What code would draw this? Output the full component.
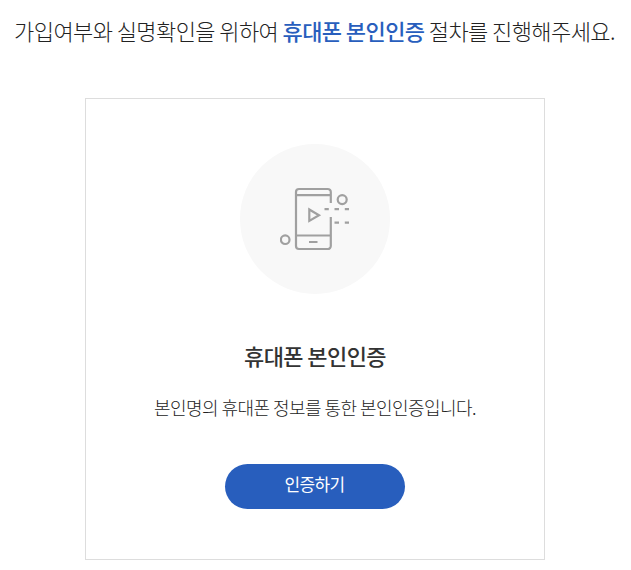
<main>
  <h1>가입여부와 실명확인을 위하여 <strong>휴대폰 본인인증</strong> 절차를 진행해주세요.</h1>
  <section class="card">
    <div class="circle">
      <svg width="70" height="64" viewBox="0 0 70 64" fill="none" stroke="#a0a0a0" stroke-width="2.2">
        <path d="M50.8 16V5a3 3 0 0 0-3-3H19a3 3 0 0 0-3 3v54a3 3 0 0 0 3 3h28.800a3 3 0 0 0 3-3V30M16 8.200h34.800M16 48.500h34.800M29 55h8.500M29.300 22.500v11.400l9.700-5.700z" />
        <path d="M44.500 22.200h4.300M54.500 22.200h4.500M64.800 22.200h4.200M54.500 35.700h4.500M64.800 35.700h4.200" />
        <circle cx="62.2" cy="12.600" r="4.500" /><circle cx="5.200" cy="52.700" r="4.300" />
      </svg>
    </div>
    <h2>휴대폰 본인인증</h2>
    <p>본인명의 휴대폰 정보를 통한 본인인증입니다.</p>
    <button type="button">인증하기</button>
  </section>
</main>

<style>
  :global(body) { background: #fff; }
  main { width: 631px; height: 570px; box-sizing: border-box; overflow: hidden; padding-top: 15px; color: #222; font-family: "Noto Sans CJK KR", sans-serif; }
  h1 { margin: 0 0 53px; padding-right: 2px; height: 30px; line-height: 30px; font-size: 22px; font-weight: 300; letter-spacing: -.58px; text-align: center; white-space: nowrap; }
  strong { font-weight: 500; color: #285ebd; }
  .card { width: 460px; height: 462px; box-sizing: border-box; margin-left: 85px; border: 1px solid #ddd; padding-top: 45px; display: flex; flex-direction: column; align-items: center; }
  .circle { width: 150px; height: 150px; border-radius: 50%; background: #f8f8f8; display: flex; align-items: center; justify-content: center; }
  h2 { margin: 46px 0 0; line-height: 30px; font-size: 22px; font-weight: 500; letter-spacing: -.6px; color: #333; }
  p { margin: 25px 0 0; line-height: 24px; font-size: 18px; font-weight: 300; letter-spacing: -.55px; }
  button { margin: 45px 0 0; width: 180px; height: 45px; border: 0; border-radius: 23px; padding: 0 1px 6px 0; background: #285ebd; color: #fff; font: 400 17px "Noto Sans CJK KR", sans-serif; letter-spacing: -.7px; }
</style>
